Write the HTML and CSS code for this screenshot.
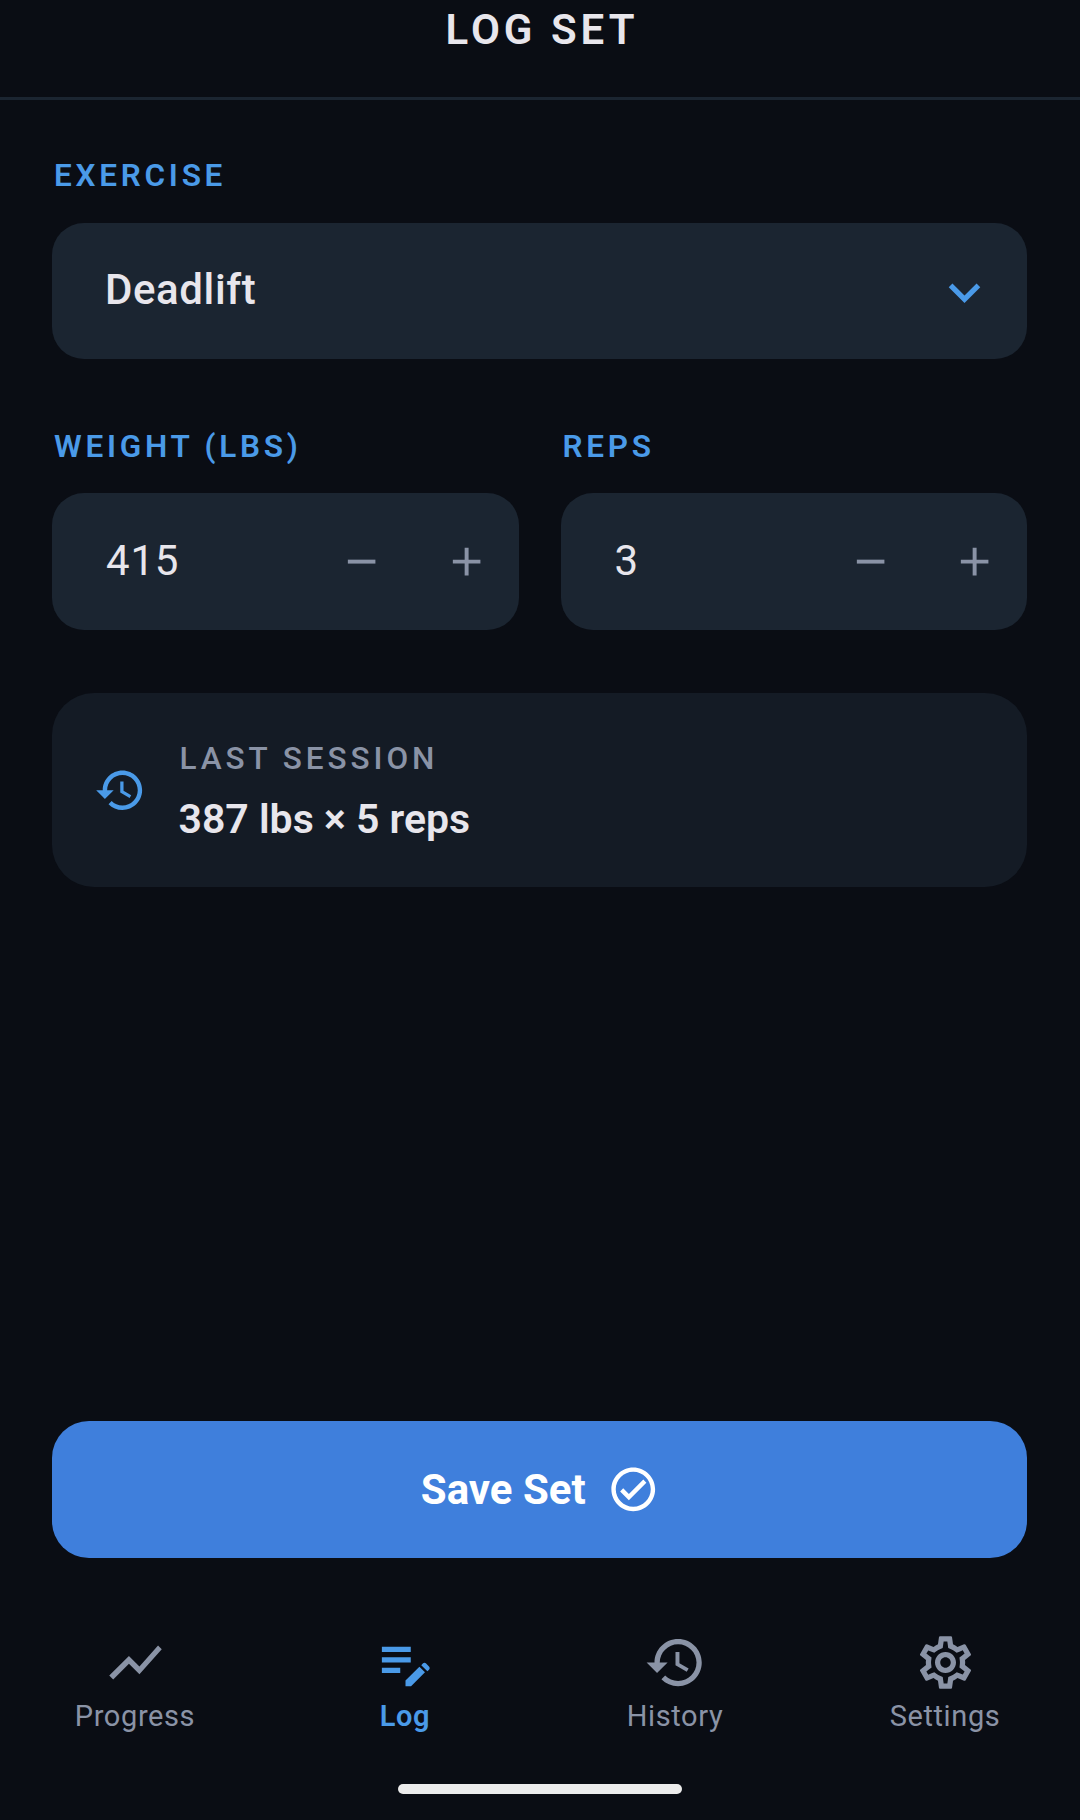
FILE: index.html
```html
<!DOCTYPE html>
<html lang="en">
<head>
<meta charset="utf-8">
<title>Log Set</title>
<link rel="stylesheet" href="styles.css">
</head>
<body>
<div class="app">
  <header class="header"><h1 class="title">LOG SET</h1></header>
  <main class="main">
    <div class="field">
      <div class="label">EXERCISE</div>
      <div class="box select">
        <span class="select-text">Deadlift</span>
        <svg class="chevron" viewBox="0 0 24 24"><path d="M16.59 8.59 12 13.17 7.41 8.59 6 10l6 6 6-6z"/></svg>
      </div>
    </div>
    <div class="pair">
      <div class="field">
        <div class="label">WEIGHT (LBS)</div>
        <div class="box stepper">
          <span class="num">415</span>
          <svg class="step" viewBox="0 0 24 24"><path d="M19 13H5v-2h14v2z"/></svg>
          <svg class="step" viewBox="0 0 24 24"><path d="M19 13h-6v6h-2v-6H5v-2h6V5h2v6h6v2z"/></svg>
        </div>
      </div>
      <div class="field">
        <div class="label">REPS</div>
        <div class="box stepper">
          <span class="num">3</span>
          <svg class="step" viewBox="0 0 24 24"><path d="M19 13H5v-2h14v2z"/></svg>
          <svg class="step" viewBox="0 0 24 24"><path d="M19 13h-6v6h-2v-6H5v-2h6V5h2v6h6v2z"/></svg>
        </div>
      </div>
    </div>
    <div class="last">
      <svg class="last-icon" viewBox="0 0 24 24"><path d="M13 3c-4.97 0-9 4.03-9 9H1l3.89 3.89.07.14L9 12H6c0-3.87 3.13-7 7-7s7 3.13 7 7-3.13 7-7 7c-1.93 0-3.68-.79-4.94-2.06l-1.42 1.42C8.27 19.99 10.51 21 13 21c4.97 0 9-4.03 9-9s-4.03-9-9-9zm-1 5v5l4.28 2.54.72-1.21-3.5-2.08V8H12z"/></svg>
      <div class="last-text">
        <div class="last-label">LAST SESSION</div>
        <div class="last-value">387 lbs × 5 reps</div>
      </div>
    </div>
    <button class="save" type="button">
      <span>Save Set</span>
      <svg class="save-icon" viewBox="0 0 24 24"><path d="M12 2C6.48 2 2 6.48 2 12s4.48 10 10 10 10-4.48 10-10S17.52 2 12 2zm0 18c-4.41 0-8-3.59-8-8s3.59-8 8-8 8 3.59 8 8-3.59 8-8 8zm4.59-12.42L10 14.17l-2.59-2.58L6 13l4 4 8-8z"/></svg>
    </button>
  </main>
  <nav class="nav">
    <div class="tab">
      <svg class="tab-icon" viewBox="0 0 24 24"><path d="M3.5 18.49l6-6.01 4 4L22 6.92l-1.41-1.41-7.09 7.97-4-4L2 16.99z"/></svg>
      <span>Progress</span>
    </div>
    <div class="tab active">
      <svg class="tab-icon" viewBox="0 0 24 24"><path d="M3 10h11v2H3v-2zm0-2h11V6H3v2zm0 8h7v-2H3v2zM18 13l.6-.6c.35-.35.9-.35 1.25 0l1.1 1.1c.35.35.35.9 0 1.25l-.6.6L18 13zm-.7.58L12 18.88V21h2.12l5.3-5.3-2.12-2.12z"/></svg>
      <span>Log</span>
    </div>
    <div class="tab">
      <svg class="tab-icon" viewBox="0 0 24 24"><path d="M13 3c-4.97 0-9 4.03-9 9H1l3.89 3.89.07.14L9 12H6c0-3.87 3.13-7 7-7s7 3.13 7 7-3.13 7-7 7c-1.93 0-3.68-.79-4.94-2.06l-1.42 1.42C8.27 19.99 10.51 21 13 21c4.97 0 9-4.03 9-9s-4.03-9-9-9zm-1 5v5l4.28 2.54.72-1.21-3.5-2.08V8H12z"/></svg>
      <span>History</span>
    </div>
    <div class="tab">
      <svg class="tab-icon" viewBox="0 0 24 24"><path d="M19.43 12.98c.04-.32.07-.64.07-.98 0-.34-.03-.66-.07-.98l2.11-1.65c.19-.15.24-.42.12-.64l-2-3.46c-.09-.16-.26-.25-.44-.25-.06 0-.12.01-.17.03l-2.49 1c-.52-.4-1.08-.73-1.69-.98l-.38-2.65C14.46 2.18 14.25 2 14 2h-4c-.25 0-.46.18-.49.42l-.38 2.65c-.61.25-1.17.59-1.69.98l-2.49-1c-.06-.02-.12-.03-.18-.03-.17 0-.34.09-.43.25l-2 3.46c-.13.22-.07.49.12.64l2.11 1.65c-.04.32-.07.65-.07.98 0 .33.03.66.07.98l-2.11 1.65c-.19.15-.24.42-.12.64l2 3.46c.09.16.26.25.44.25.06 0 .12-.01.17-.03l2.49-1c.52.4 1.08.73 1.69.98l.38 2.65c.03.24.24.42.49.42h4c.25 0 .46-.18.49-.42l.38-2.65c.61-.25 1.17-.59 1.69-.98l2.49 1c.06.02.12.03.18.03.17 0 .34-.09.43-.25l2-3.46c.12-.22.07-.49-.12-.64l-2.11-1.65zm-1.98-1.71c.04.31.05.52.05.73 0 .21-.02.43-.05.73l-.14 1.13.89.7 1.08.84-.7 1.21-1.27-.51-1.04-.42-.9.68c-.43.32-.84.56-1.25.73l-1.06.43-.16 1.13-.2 1.35h-1.4l-.19-1.35-.16-1.13-1.06-.43c-.43-.18-.83-.41-1.23-.71l-.91-.7-1.06.43-1.27.51-.7-1.21 1.08-.84.89-.7-.14-1.13c-.03-.31-.05-.54-.05-.74s.02-.43.05-.73l.14-1.13-.89-.7-1.08-.84.7-1.21 1.27.51 1.04.42.9-.68c.43-.32.84-.56 1.25-.73l1.06-.43.16-1.13.2-1.35h1.39l.19 1.35.16 1.13 1.06.43c.43.18.83.41 1.23.71l.91.7 1.06-.43 1.27-.51.7 1.21-1.07.85-.89.7.14 1.13zM12 8c-2.21 0-4 1.79-4 4s1.79 4 4 4 4-1.79 4-4-1.79-4-4-4zm0 6c-1.1 0-2-.9-2-2s.9-2 2-2 2 .9 2 2-.9 2-2 2z"/></svg>
      <span>Settings</span>
    </div>
  </nav>
  <div class="home-bar"><div class="home-pill"></div></div>
</div>
</body>
</html>
```
FILE: styles.css
```css
* { box-sizing: border-box; }
html, body { margin: 0; padding: 0; background: #0a0d14; }
body { font-family: Roboto, "Noto Sans", sans-serif; color: #e8e6ec; }
.app { width: 1080px; height: 1820px; display: flex; flex-direction: column; overflow: hidden; }

.header { height: 100px; border-bottom: 3px solid #1b2531; text-align: center; padding: 5px 0 0 4px; flex: none; }
.title { margin: 0; font-size: 42px; line-height: 49px; font-weight: 600; letter-spacing: 4px; }

.main { flex: 1; display: flex; flex-direction: column; padding: 57px 53px 0 52px; }
.label { font-size: 31.5px; line-height: 37px; font-weight: 600; letter-spacing: 3.75px; color: #4a9ae8; margin: 0 0 29px 2px; }
.box { background: #1b2531; border-radius: 32px; height: 137px; display: flex; align-items: center; }

.select { height: 136px; justify-content: space-between; padding: 0 31px 4px 53px; }
.select-text { font-size: 42px; font-weight: 480; letter-spacing: 0.6px; }
.chevron { width: 63px; height: 63px; fill: #4a9ae8; margin-top: 7px; }

.pair { display: grid; grid-template-columns: 1fr 1fr; gap: 42px; margin-top: 69px; }
.pair .label { margin-bottom: 28px; }
.stepper { padding: 0 28.5px 0 54px; }
.num { flex: 1; font-size: 42px; font-weight: 400; letter-spacing: 0.8px; padding-bottom: 2px; }
.step { width: 47.25px; height: 47.25px; fill: #8a93a6; flex: none; }
.step + .step { margin-left: 57.5px; }

.last { margin-top: 63px; height: 194px; background: #141b25; border-radius: 42px; display: flex; align-items: center; padding: 3px 0 0 42px; gap: 33px; }
.last-icon { width: 52.5px; height: 52.5px; fill: #4a9ae8; flex: none; margin-top: -3px; }
.last-label { font-size: 31.5px; line-height: 37px; font-weight: 500; letter-spacing: 3.94px; color: #8a93a6; margin-bottom: 18px; }
.last-value { font-size: 41px; line-height: 48px; font-weight: 600; margin-left: -1px; }

.save { margin-top: auto; height: 137px; flex: none; border: 0; border-radius: 37px; background: #3f7fdc; color: #fff; font-family: inherit; font-size: 42px; font-weight: 700; display: flex; align-items: center; justify-content: center; gap: 21px; padding: 0 0 0 1px; }
.save-icon { width: 52.5px; height: 52.5px; fill: #fff; flex: none; }

.nav { flex: none; display: grid; grid-template-columns: repeat(4, 270px); margin-top: 73px; }
.tab { display: flex; flex-direction: column; align-items: center; color: #8a93a6; font-size: 29px; line-height: 34px; letter-spacing: 0.6px; }
.tab.active { color: #4a9ae8; font-weight: 600; }
.tab-icon { width: 63px; height: 63px; fill: currentColor; margin-bottom: 5px; }

.home-bar { flex: none; height: 87px; display: flex; justify-content: center; padding-top: 51px; }
.home-pill { width: 284px; height: 10px; border-radius: 5px; background: #ececec; }
```
